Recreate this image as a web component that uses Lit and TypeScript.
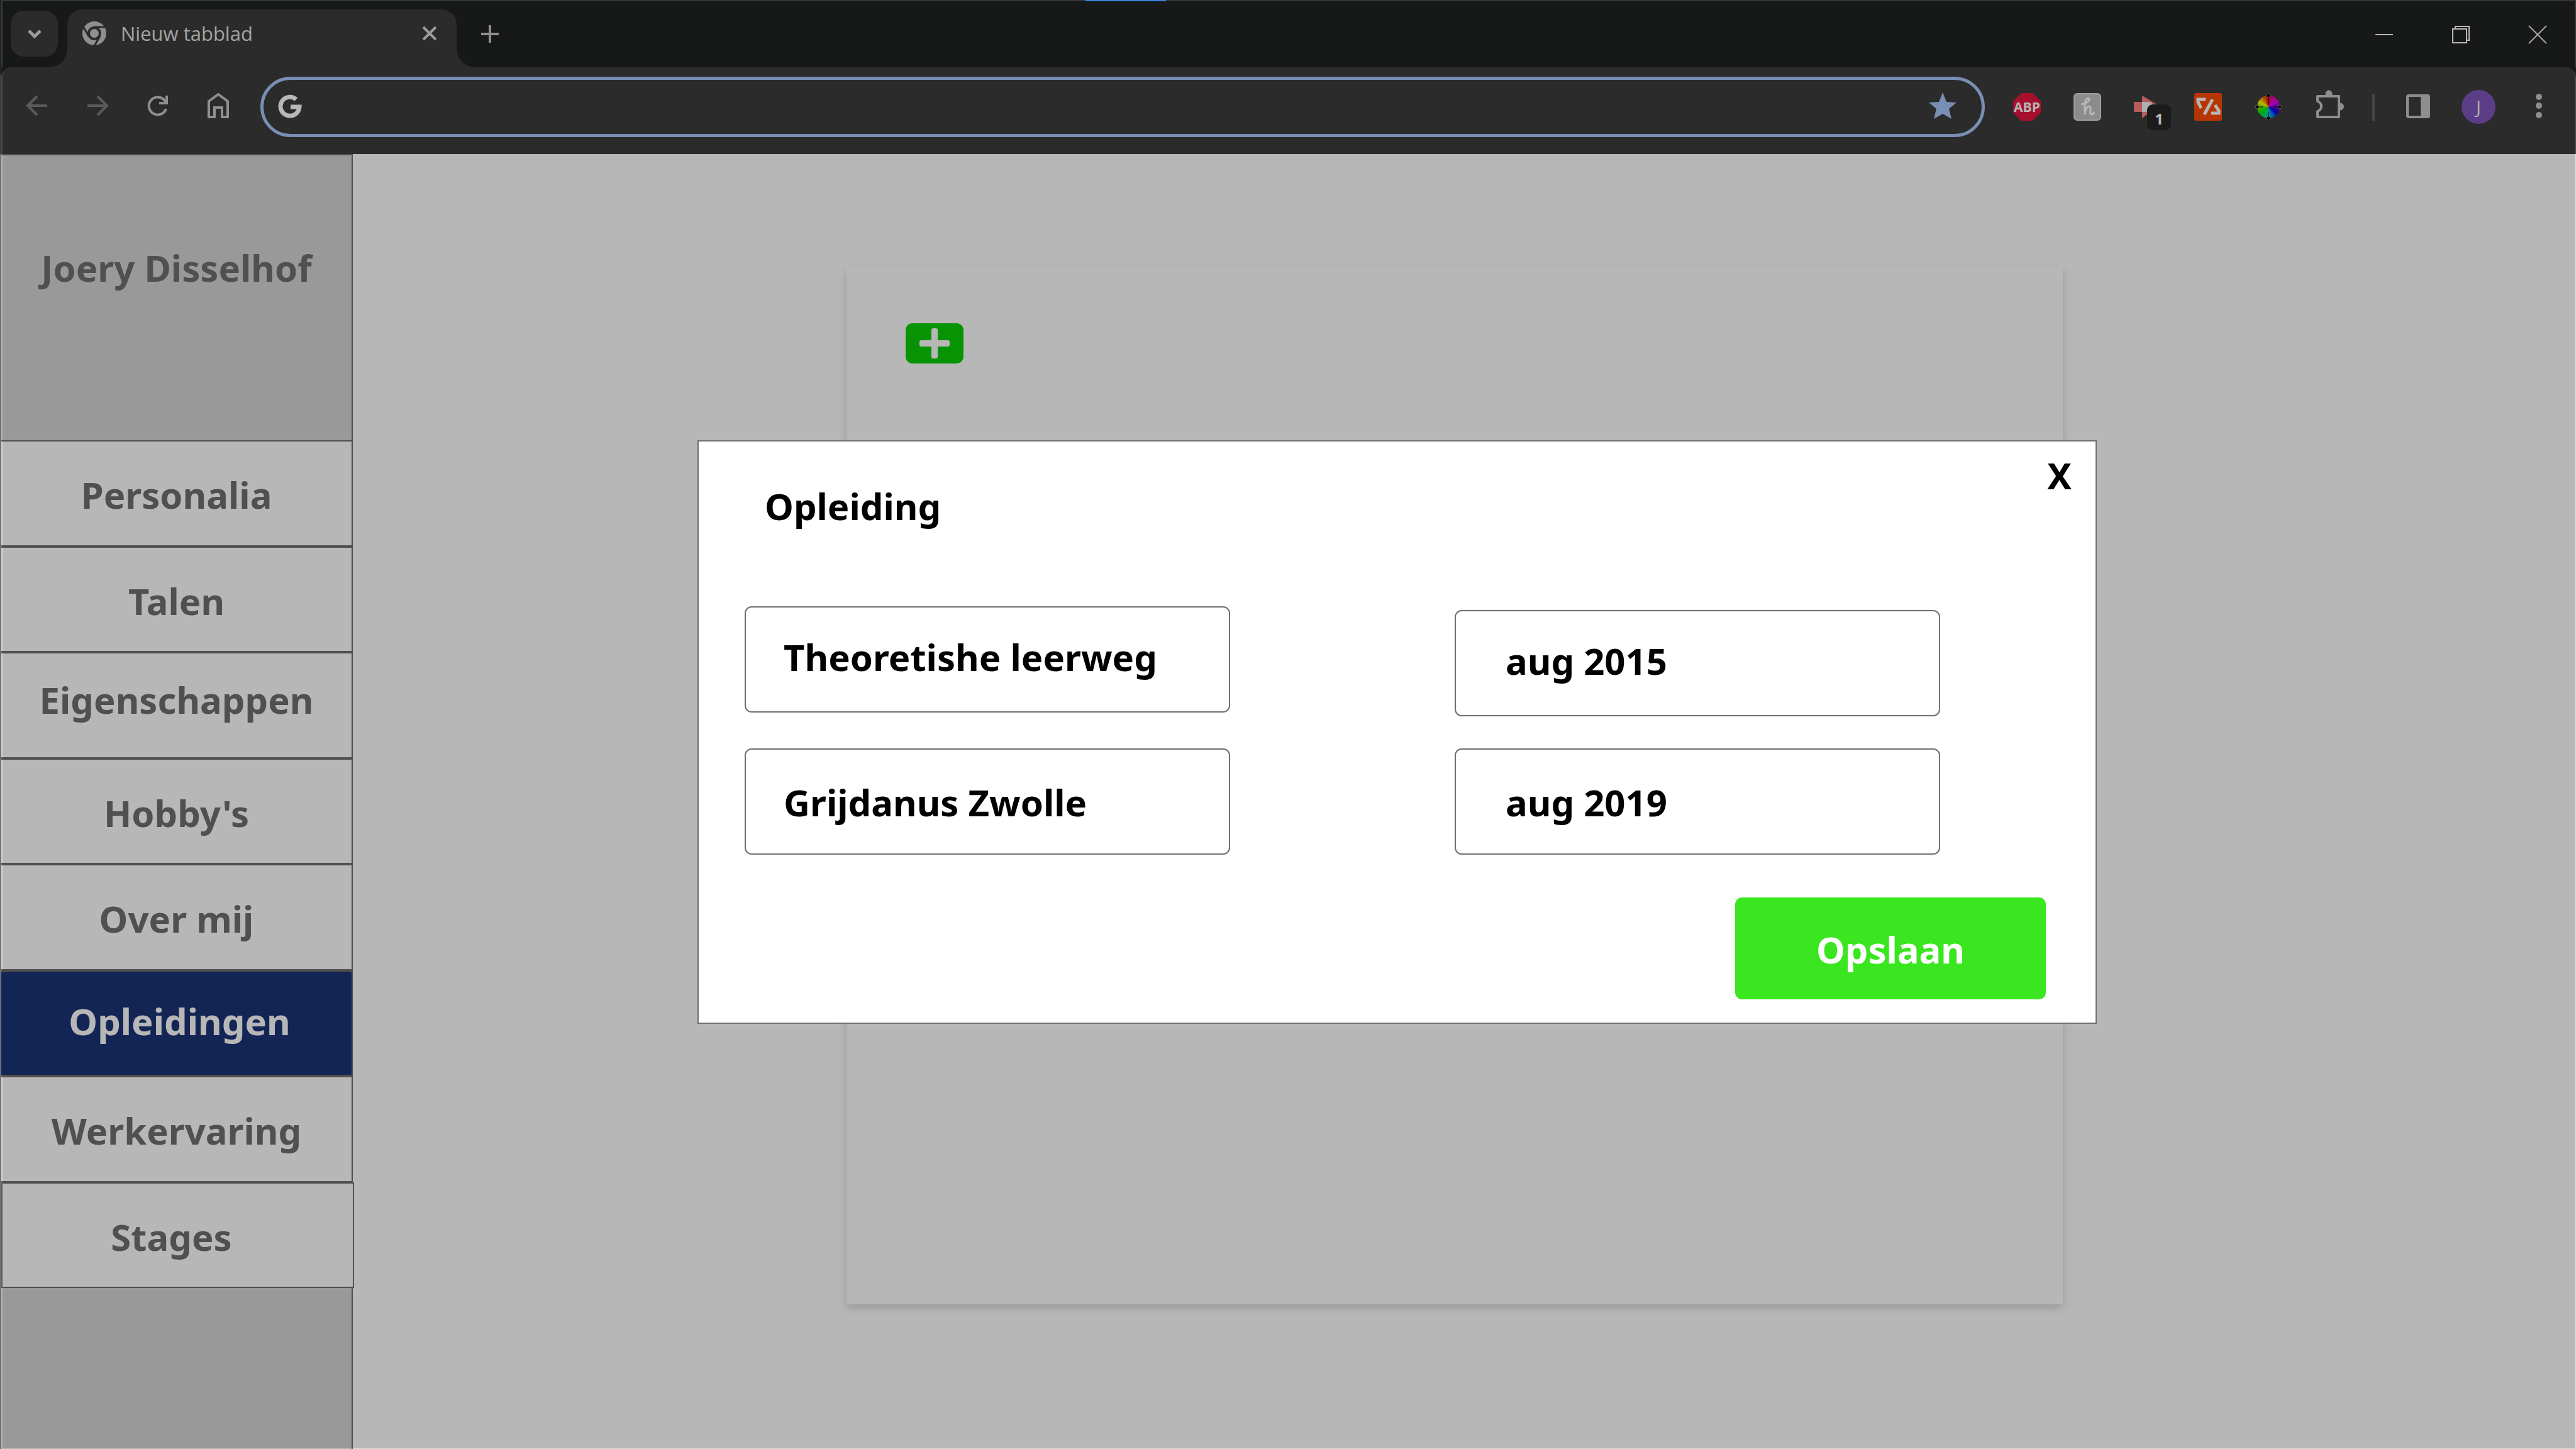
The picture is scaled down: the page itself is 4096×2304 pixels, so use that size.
import { LitElement, html, css, svg, TemplateResult } from "lit";
import { customElement, property, state } from "lit/decorators.js";
import { classMap } from "lit/directives/class-map.js";

/* Every icon is drawn on a 48 x 48 canvas whose origin is its centre. */
const icon = (content: unknown, name = ""): TemplateResult => html`
  <svg class="icon ${name}" viewBox="-24 -24 48 48" width="48" height="48" aria-hidden="true">${content}</svg>
`;

const chevron = svg`<path d="M-9 -5 L0 4 L9 -5" fill="none" stroke="#d8d8d8" stroke-width="5"/>`;
const chromeLogo = svg`
  <circle r="19" fill="#c7c7c7"/>
  <g stroke="#3c3c3c" stroke-width="3">
    <path d="M0 -10 H20"/>
    <path d="M0 -10 H20" transform="rotate(120)"/>
    <path d="M0 -10 H20" transform="rotate(240)"/>
  </g>
  <circle r="9" fill="#c7c7c7" stroke="#3c3c3c" stroke-width="4"/>`;
const cross = svg`<path d="M-10 -10 L10 10 M10 -10 L-10 10" stroke="#d8d8d8" stroke-width="4"/>`;
const plus = svg`<path d="M-14 0 H14 M0 -14 V14" stroke="#c7c7c7" stroke-width="4"/>`;
const minimise = svg`<path d="M-14 0 H14" stroke="#fff" stroke-width="2"/>`;
const restore = svg`<path d="M-13 -9 H9 V13 H-13 Z M-9 -9 V-13 H13 V9 H9" fill="none" stroke="#fff" stroke-width="2"/>`;
const closeWindow = svg`<path d="M-14 -14 L14 14 M14 -14 L-14 14" stroke="#e8e8e8" stroke-width="2"/>`;

const back = svg`<path d="M16 -2 H-14 M0 -17 L-15 -2 L0 13" fill="none" stroke="#7f7f7f" stroke-width="4"/>`;
const forward = svg`<path d="M-16 -2 H14 M0 -17 L15 -2 L0 13" fill="none" stroke="#7f7f7f" stroke-width="4"/>`;
const reload = svg`<path d="M13 3 A14 14 0 1 1 9 -12 L14 -7 M14 -18 V-6 H2" fill="none" stroke="#c7c7c7" stroke-width="4"/>`;
const home = svg`<path d="M-15 -9 L0 -20 L15 -9 V16 H6 V1 H-6 V16 H-15 Z" fill="none" stroke="#c7c7c7" stroke-width="4"/>`;
const searchLogo = svg`<path d="M9 -12 A15 15 0 1 0 14 0 H0" fill="none" stroke="#fff" stroke-width="7"/>`;
const star = svg`<path d="M0 -23 L6 -8 L22 -7 L10 3 L14 19 L0 11 L-14 19 L-10 3 L-22 -7 L-6 -8 Z" fill="#a8c7fa"/>`;
const adBlock = svg`
  <path d="M-9 -22 H9 L22 -9 V9 L9 22 H-9 L-22 9 V-9 Z" fill="#ea1640"/>
  <text y="8" text-anchor="middle" font-size="21" font-weight="700" fill="#fff">ABP</text>`;
const coupon = svg`
  <rect x="-21" y="-21" width="42" height="42" rx="5" fill="#c4c4c4" stroke="#dedede" stroke-width="2"/>
  <path d="M-10 -4 C-2 -5 4 -9 3 -13 C1 -16 -4 -12 -4 -2 V12 C-4 6 -1 -1 3 -1 C8 0 2 12 7 12 C9 12 10 10 11 8" fill="none" stroke="#fff" stroke-width="3"/>`;
const redirect = svg`
  <path d="M-22 -8 H-9 V-18 L18 -2 L-9 18 V8 H-22 Z" fill="#ff7f80"/>
  <path d="M-9 -8 H4 L9 -3 V8 H-9 Z" fill="#f4f4f4"/>`;
const template = svg`
  <rect x="-22" y="-22" width="44" height="44" rx="3" fill="#ff4a03"/>
  <path d="M7 -12 L-6 12 M-4 -12 H-16 V-8 L-11 2 M11 -3 L17 6 V10 H5" fill="none" stroke="#fff" stroke-width="5"/>`;
const pickerDots = svg`
  <path d="M0 -17 V-4 M0 8 V17 M-17 0 H-8 M8 0 H17" stroke="#000" stroke-opacity="0.5" stroke-width="2"/>
  <g fill="#000" stroke="#888" stroke-width="1">
    <circle cy="-18" r="3"/><circle cy="18" r="3"/><circle cx="-18" r="3"/><circle cx="18" r="3"/>
  </g>`;
const puzzle = svg`
  <path d="M-18 -17 H16 V16 H-18 V7 C-10 4 -10 -6 -18 -9 Z" fill="none" stroke="#c7c7c7" stroke-width="4" stroke-linejoin="round"/>
  <path d="M-5 -18 V-21 A5 5 0 0 1 5 -21 V-18 Z M17 -6 H18 A5 5 0 0 1 18 5 H17 Z" fill="#c7c7c7" stroke="#c7c7c7"/>`;
const panel = svg`
  <rect x="-17" y="-18" width="34" height="34" rx="2" fill="none" stroke="#c7c7c7" stroke-width="4"/>
  <path d="M4 -18 H17 V16 H4 Z" fill="#c7c7c7"/>`;
const menuDots = svg`<g fill="#c7c7c7"><circle cy="-16" r="5"/><circle cy="-2" r="5"/><circle cy="13" r="5"/></g>`;

@customElement("browser-chrome")
export class BrowserChrome extends LitElement {
  static styles = css`
    :host { display: block; font-family: "Open Sans", "Noto Sans", sans-serif; }
    button, input { margin: 0; padding: 0; border: 0; background: none; font: inherit; color: inherit; }
    button { display: flex; align-items: center; justify-content: center; flex: none; }
    .icon { display: block; flex: none; overflow: visible; font-family: "Open Sans", sans-serif; }
    .strip {
      display: flex; align-items: flex-end; height: 105px; padding-left: 13px;
      border-top: 2px solid #3f4040; border-left: 2px solid #444645; border-right: 2px solid #444645;
      background: #202422; position: relative;
    }
    .frame { padding-left: 2px; background: linear-gradient(#202422 117px, #3c3c3c 117px); }
    .loading { position: absolute; top: -2px; left: 42.1%; width: 128px; height: 2px; background: #409cff; }
    .tab-search { width: 75px; height: 73px; margin: 0 15px 17px 0; border-radius: 21px; background: #3c3c3c; }
    .tab {
      position: relative; display: flex; align-items: center; width: 619px; height: 92px; box-sizing: border-box;
      padding: 0 19px 16px 19px; border-radius: 24px 24px 0 0; background: #3c3c3c; color: #e3e3e3; font-size: 31px;
    }
    .tab::before, .tab::after { content: ""; position: absolute; bottom: 0; width: 28px; height: 28px; }
    .tab::before { right: 100%; background: radial-gradient(circle at 0 0, transparent 27px, #3c3c3c 28px); }
    .tab::after { left: 100%; background: radial-gradient(circle at 100% 0, transparent 27px, #3c3c3c 28px); }
    .tab-title { flex: 1; padding-left: 18px; line-height: 40px; }
    .new-tab { width: 96px; height: 73px; margin: 0 0 17px 5px; }
    .controls { display: flex; margin: 0 -2px 0 auto; }
    .controls button { width: 122px; height: 105px; }
    .toolbar-back { background: #202422; }
    .toolbar {
      display: flex; align-items: center; padding: 15px 9px 27px 7px; background: #3c3c3c;
      border-left: 2px solid #555; border-right: 2px solid #585858; border-radius: 17px 17px 0 0;
    }
    .toolbar button { width: 96px; height: 96px; position: relative; }
    .omnibox {
      flex: 1; display: flex; align-items: center; box-sizing: border-box; height: 96px; min-width: 0;
      margin: 0 19px; padding: 0 38px 0 19px; border: 5px solid #a8c7fa; border-radius: 48px; color: #fff; font-size: 32px;
    }
    .omnibox input { flex: 1; min-width: 0; height: 60px; padding: 0 24px; outline: none; }
    .badge {
      position: absolute; left: 47px; top: 44px; width: 38px; height: 41px; border-radius: 9px; background: #262626;
      color: #fff; font: 700 24px/46px "Noto Sans", sans-serif; text-align: center;
    }
    .wheel {
      position: absolute; left: 30px; top: 30px; width: 36px; height: 36px; border-radius: 50%;
      background: conic-gradient(#d00020, #f0a 25deg, #d0f 60deg, #70c 90deg, #00e 125deg, #08e 155deg, #0cc 180deg, #0d8 200deg, #0e0 235deg, #6e0 265deg, #ff0 300deg, #f60 335deg, #d00020);
    }
    .wheel-dots { position: relative; }
    .divider { width: 4px; height: 43px; margin: 0 21px; background: #606060; }
    .avatar {
      display: block; width: 54px; height: 54px; border-radius: 50%; background: #7f55be; color: #eee;
      font: 400 30px/54px "Open Sans", sans-serif; text-align: center;
    }
  `;

  private tool(label: string, content: unknown) {
    return html`<button aria-label=${label}>${content}</button>`;
  }

  render() {
    return html`
      <header class="frame">
        <div class="strip">
          <span class="loading"></span>
          <button class="tab-search" aria-label="Tabbladen zoeken">${icon(chevron)}</button>
          <div class="tab">
            ${icon(chromeLogo)}
            <span class="tab-title">Nieuw tabblad</span>
            <button aria-label="Tabblad sluiten">${icon(cross)}</button>
          </div>
          <button class="new-tab" aria-label="Nieuw tabblad openen">${icon(plus)}</button>
          <div class="controls">
            ${this.tool("Minimaliseren", icon(minimise))}
            ${this.tool("Verkleinen", icon(restore))}
            ${this.tool("Venster sluiten", icon(closeWindow))}
          </div>
        </div>
        <div class="toolbar-back">
          <div class="toolbar">
            ${this.tool("Terug", icon(back))}
            ${this.tool("Vooruit", icon(forward))}
            ${this.tool("Vernieuwen", icon(reload))}
            ${this.tool("Startpagina", icon(home))}
            <div class="omnibox">
              ${icon(searchLogo)}
              <input type="text" aria-label="Adresbalk" />
              ${icon(star)}
            </div>
            ${this.tool("Advertenties blokkeren", icon(adBlock))}
            ${this.tool("Kortingscodes", icon(coupon))}
            ${this.tool("Doorverwijzingen", html`${icon(redirect)}<span class="badge">1</span>`)}
            ${this.tool("Sjablonen", icon(template))}
            ${this.tool("Kleurkiezer", html`<span class="wheel"></span>${icon(pickerDots, "wheel-dots")}`)}
            ${this.tool("Extensies", icon(puzzle))}
            <span class="divider"></span>
            ${this.tool("Zijpaneel", icon(panel))}
            ${this.tool("Profiel", html`<span class="avatar">J</span>`)}
            ${this.tool("Menu", icon(menuDots))}
          </div>
        </div>
      </header>
    `;
  }
}

interface Section { label: string; tone?: "raised" | "active" | "shifted"; }

@customElement("profile-sidebar")
export class ProfileSidebar extends LitElement {
  static styles = css`
    :host { display: block; }
    .sidebar {
      display: grid; grid-template-rows: 453fr 1348fr 256fr; height: 100%; box-sizing: border-box; background: #d6d6d6;
      border: 2px solid #707070; border-bottom: 0; color: #707070; font-size: 58px; font-weight: 700; line-height: 84px;
    }
    .owner { margin: 0; padding-top: 137px; font-size: inherit; text-align: center; }
    .sections { display: grid; grid-auto-rows: 1fr; margin: 0 -2px; }
    .item {
      display: flex; align-items: center; justify-content: center; box-sizing: border-box; padding-top: 6px;
      border: 2px solid #707070; background: #fff; color: inherit; text-decoration: none;
    }
    .raised { padding: 0 0 16px; }
    .active { padding: 0 0 6px 10px; background: #1b3477; color: #fff; }
    .shifted { margin: 0 -2px 0 2px; padding-right: 20px; }
  `;

  @property({ attribute: false }) sections: Section[] = [];
  @property() owner = "";

  render() {
    return html`
      <aside class="sidebar">
        <h1 class="owner">${this.owner}</h1>
        <nav class="sections">
          ${this.sections.map((s) => html`
            <a href="#" class=${classMap({ item: true, raised: s.tone === "raised", active: s.tone === "active", shifted: s.tone === "shifted" })}>${s.label}</a>
          `)}
        </nav>
      </aside>
    `;
  }
}

@customElement("education-dialog")
export class EducationDialog extends LitElement {
  static styles = css`
    :host { display: block; }
    .dialog {
      box-sizing: border-box; padding: 0 79px 37px 73px; border: 2px solid #707070; background: #fff; color: #000;
      font-size: 58px; font-weight: 700; line-height: 84px;
    }
    .head { display: flex; justify-content: space-between; align-items: flex-start; height: 262px; }
    .title { margin: 0; padding: 61px 0 0 32px; font-size: inherit; }
    .close { margin: 12px -41px 0 0; padding: 0; border: 0; background: none; font: inherit; color: inherit; }
    .fields { display: grid; grid-template-columns: 1fr 1fr; column-gap: 357px; align-items: end; margin-right: 168px; }
    .column { display: flex; flex-direction: column; gap: 57px; }
    .period { gap: 51px; }
    .field {
      box-sizing: border-box; width: 100%; height: 169px; padding: 2px 20px 0 60px; border: 2px solid #707070;
      border-radius: 11px; background: #fff; color: inherit; font: inherit; outline: none;
    }
    .column .field:first-child { padding-bottom: 10px; }
    .period .field { padding-left: 79px; }
    .actions { display: flex; justify-content: flex-end; margin-top: 68px; }
    .save {
      width: 494px; height: 162px; padding: 4px 0 0; border: 0; border-radius: 11px; background: #3ae61f; color: #fff; font: inherit;
    }
  `;

  render() {
    return html`
      <form class="dialog" role="dialog" aria-label="Opleiding">
        <div class="head">
          <h2 class="title">Opleiding</h2>
          <button type="button" class="close" aria-label="Sluiten">X</button>
        </div>
        <div class="fields">
          <div class="column">
            <input class="field" type="text" aria-label="Opleiding" value="Theoretishe leerweg" />
            <input class="field" type="text" aria-label="School" value="Grijdanus Zwolle" />
          </div>
          <div class="column period">
            <input class="field" type="text" aria-label="Begindatum" value="aug 2015" />
            <input class="field" type="text" aria-label="Einddatum" value="aug 2019" />
          </div>
        </div>
        <div class="actions"><button type="button" class="save">Opslaan</button></div>
      </form>
    `;
  }
}

@customElement("app-root")
export class AppRoot extends LitElement {
  static styles = css`
    :host { display: block; font-family: "Noto Sans", "Open Sans", sans-serif; }
    .screen { position: relative; display: grid; grid-template-rows: auto 1fr; min-height: 100vh; background: #fff; overflow: hidden; }
    .body { display: grid; grid-template-columns: 561fr 3535fr; }
    .sidebar { position: relative; z-index: 1; }
    .content { display: grid; grid-template-columns: 785fr 1934fr 816fr; grid-template-rows: 180fr 1649fr 230fr; }
    .card { grid-area: 2 / 2; padding: 89px 94px; background: #fff; box-shadow: 0 6px 13px rgba(0, 0, 0, 0.16); }
    .add {
      display: flex; align-items: center; justify-content: center; width: 92px; height: 64px; padding: 0; border: 0;
      border-radius: 11px; background: #0bcf06;
    }
    .shade {
      position: absolute; z-index: 2; inset: 0 0 0 2px; border: 2px solid rgba(0, 0, 0, 0.16);
      background: rgba(0, 0, 0, 0.283); background-clip: padding-box;
    }
    .layer {
      position: absolute; z-index: 3; inset: 0; display: grid;
      grid-template-columns: 1109fr 2225fr 762fr; grid-template-rows: 700fr auto 676fr;
    }
    .dialog { grid-area: 2 / 2; }
  `;

  @state() private sections: Section[] = [
    { label: "Personalia" },
    { label: "Talen" },
    { label: "Eigenschappen", tone: "raised" },
    { label: "Hobby's" },
    { label: "Over mij" },
    { label: "Opleidingen", tone: "active" },
    { label: "Werkervaring" },
    { label: "Stages", tone: "shifted" },
  ];

  render() {
    return html`
      <div class="screen">
        <browser-chrome></browser-chrome>
        <div class="body">
          <profile-sidebar class="sidebar" owner="Joery Disselhof" .sections=${this.sections}></profile-sidebar>
          <main class="content">
            <section class="card">
              <button class="add" aria-label="Opleiding toevoegen">
                <svg viewBox="0 0 48 48" width="48" height="48" aria-hidden="true">
                  <rect x="19" width="10" height="48" rx="3" fill="#fff" />
                  <rect y="19" width="48" height="10" rx="3" fill="#fff" />
                </svg>
              </button>
            </section>
          </main>
        </div>
        <div class="shade"></div>
        <div class="layer"><education-dialog class="dialog"></education-dialog></div>
      </div>
    `;
  }
}
